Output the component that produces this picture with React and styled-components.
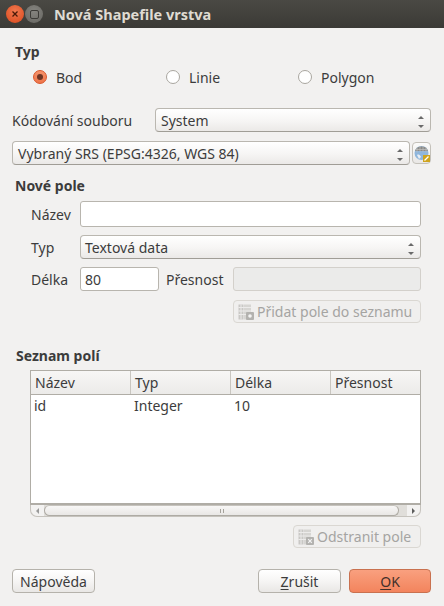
import React from 'react';
import styled, { createGlobalStyle } from 'styled-components';

const Global = createGlobalStyle`
    html, body {
        margin: 0;
        padding: 0;
        background: #f2f1f0;
    }
    * {
        box-sizing: border-box;
    }
    body {
        font-family: "Noto Sans", "Open Sans", sans-serif;
        font-size: 14px;
        color: #3c3c3c;
    }
`;

const Window = styled.div`
    width: 444px;
    height: 606px;
    display: flex;
    flex-direction: column;
    background: #f2f1f0;
    overflow: hidden;
`;

const TitleBar = styled.div`
    height: 28px;
    flex: none;
    display: flex;
    align-items: center;
    padding-left: 6px;
    background: linear-gradient(#4a4944, #3b3a36);
`;

const WinButton = styled.div`
    width: 18px;
    height: 18px;
    margin-right: 1px;
    border-radius: 50%;
    display: flex;
    align-items: center;
    justify-content: center;
    color: #3c3b37;
    background: ${p => (p.$close
        ? 'radial-gradient(circle at 50% 35%, #f2794f, #d9481c)'
        : 'radial-gradient(circle at 50% 35%, #85847f, #666560)')};
`;

const MaxBox = styled.div`
    width: 9px;
    height: 9px;
    border: 1px solid #3c3b37;
    border-radius: 2px;
`;

const Title = styled.div`
    margin-left: 10px;
    font-size: 14.5px;
    font-weight: 700;
    color: #dfdbd2;
`;

const Body = styled.div`
    flex: 1;
    display: flex;
    flex-direction: column;
    padding: 15px 13px 12px 12px;
`;

const Heading = styled.div`
    height: 18px;
    line-height: 18px;
    font-weight: 700;
    font-size: 14px;
    color: #3c3c3c;
    padding-left: ${p => p.$indent || 3}px;
    margin-top: ${p => p.$top || 0}px;
`;

const RadioRow = styled.div`
    display: grid;
    grid-template-columns: 133px 132px 1fr;
    padding-left: 21px;
    margin-top: 6px;
    height: 20px;
    align-items: center;
`;

const RadioItem = styled.label`
    display: flex;
    align-items: center;
    gap: 9px;
`;

const RadioDot = styled.span`
    width: 14px;
    height: 14px;
    border-radius: 50%;
    display: flex;
    align-items: center;
    justify-content: center;
    border: 1px solid ${p => (p.$on ? '#d9562a' : '#a9a69f')};
    background: ${p => (p.$on ? 'linear-gradient(#f5926b, #ee7449)' : '#fff')};
    &::after {
        content: '';
        display: ${p => (p.$on ? 'block' : 'none')};
        width: 6px;
        height: 6px;
        border-radius: 50%;
        background: #6e3524;
    }
`;

const Row = styled.div`
    display: flex;
    align-items: center;
    height: ${p => p.$h || 24}px;
    margin-top: ${p => p.$top || 0}px;
    padding-left: ${p => p.$left || 0}px;
    padding-right: ${p => p.$right || 0}px;
`;

const Label = styled.div`
    width: ${p => p.$w}px;
    flex: none;
    padding-left: ${p => p.$pad || 0}px;
`;

const Select = styled.div`
    flex: 1;
    height: ${p => p.$h || 24}px;
    display: flex;
    align-items: center;
    justify-content: space-between;
    padding: 0 6px 0 ${p => p.$pad || 5}px;
    border: 1px solid #bab7b0;
    border-bottom-color: #a09d96;
    border-radius: 4px;
    background: linear-gradient(#ffffff, #f6f5f4 55%, #ebe9e7);
`;

const ArrowStack = styled.span`
    display: flex;
    flex-direction: column;
    gap: 6px;
    margin-top: 3px;
    &::before, &::after {
        content: '';
        width: 0;
        height: 0;
        border-left: 3px solid transparent;
        border-right: 3px solid transparent;
    }
    &::before {
        border-bottom: 3px solid #6a6a6a;
    }
    &::after {
        border-top: 3px solid #6a6a6a;
    }
`;

const SrsButton = styled.div`
    width: 19px;
    height: 22px;
    margin-left: 2px;
    flex: none;
    display: flex;
    align-items: center;
    justify-content: center;
    border: 1px solid #c4c1ba;
    border-radius: 4px;
    background: linear-gradient(#fbfbfa, #e9e7e5);
`;

const Input = styled.div`
    height: ${p => p.$h || 24}px;
    width: ${p => (p.$w ? `${p.$w}px` : 'auto')};
    flex: ${p => (p.$w ? 'none' : '1')};
    display: flex;
    align-items: center;
    padding-left: 4px;
    border: 1px solid ${p => (p.$disabled ? '#d3d0cb' : '#b8b5ae')};
    border-radius: 3px;
    background: ${p => (p.$disabled ? '#ebebea' : '#fff')};
`;

const ActionRow = styled.div`
    display: flex;
    justify-content: flex-end;
    margin-top: ${p => p.$top}px;
    padding-right: ${p => p.$right || 10}px;
`;

const GhostButton = styled.div`
    width: ${p => p.$w}px;
    height: ${p => p.$h || 23}px;
    display: flex;
    align-items: center;
    justify-content: flex-start;
    gap: 3px;
    padding-left: 4px;
    color: #a5a4a2;
    border: 1px solid #dad7d2;
    border-radius: 4px;
    background: #f0efee;
`;

const Table = styled.div`
    margin: 5px 10px 0 18px;
    height: 135px;
    flex: none;
    display: flex;
    flex-direction: column;
    border: 1px solid #b0ada6;
    border-bottom-width: 2px;
    background: #fff;
`;

const HeaderRow = styled.div`
    display: grid;
    grid-template-columns: 100px 100px 100px 1fr;
    height: 24px;
    flex: none;
    background: linear-gradient(#f7f6f5, #ecebe9);
    border-bottom: 1px solid #b0ada6;
`;

const HeaderCell = styled.div`
    display: flex;
    align-items: center;
    padding-left: 4px;
    border-right: 1px solid #c9c6c0;
    &:last-child {
        border-right: none;
    }
`;

const DataRow = styled.div`
    display: grid;
    grid-template-columns: 100px 100px 100px 1fr;
    height: 20px;
    align-items: center;
`;

const DataCell = styled.div`
    padding-left: 3px;
`;

const ScrollBar = styled.div`
    margin: 0 10px 0 18px;
    height: 12px;
    flex: none;
    display: flex;
    border: 1px solid #c6c3bd;
    border-top: none;
    border-radius: 0 0 7px 7px;
    background: #e0deda;
`;

const ScrollEnd = styled.div`
    width: 13px;
    flex: none;
    display: flex;
    align-items: center;
    justify-content: center;
    background: #f3f2f1;
    border-radius: ${p => (p.$left ? '0 0 0 7px' : '0 0 7px 0')};
    &::after {
        content: '';
        border-top: 3px solid transparent;
        border-bottom: 3px solid transparent;
        ${p => (p.$left ? 'border-right: 3px solid #9a9a9a;' : 'border-left: 3px solid #5c5c5c;')}
    }
`;

const ScrollThumb = styled.div`
    width: 355px;
    flex: none;
    display: flex;
    align-items: center;
    justify-content: center;
    gap: 2px;
    border: 1px solid #aeaba4;
    border-top-color: #c6c3bd;
    border-radius: 7px;
    background: linear-gradient(#f8f7f6, #e9e7e5);
`;

const Grip = styled.span`
    width: 1px;
    height: 4px;
    background: #a5a29b;
`;

const ScrollRest = styled.div`
    flex: 1;
`;

const Footer = styled.div`
    display: flex;
    margin-top: 21px;
    height: 24px;
`;

const Button = styled.div`
    width: ${p => p.$w}px;
    height: 24px;
    margin-left: ${p => p.$left || 0}px;
    display: flex;
    align-items: center;
    justify-content: center;
    border-radius: 4px;
    border: 1px solid ${p => (p.$primary ? '#c9714f' : '#b5b2ab')};
    background: ${p => (p.$primary
        ? 'linear-gradient(#f9a07f, #f3845d)'
        : 'linear-gradient(#ffffff, #f6f5f4 50%, #e9e7e5)')};
    color: ${p => (p.$primary ? '#43302a' : '#3c3c3c')};
`;

const Key = styled.span`
    text-decoration: underline;
    text-underline-offset: 2px;
`;

const CloseMark = () => (
    <svg width="8" height="8" viewBox="0 0 8 8">
        <path d="M1.5 1.5l5 5M6.5 1.5l-5 5" stroke="#4a1a08" strokeWidth="1.3" />
    </svg>
);

const TableIcon = ({ remove }) => (
    <svg width="16" height="16" viewBox="0 0 16 16">
        <rect x="0.5" y="0.5" width="5" height="15" fill="#c9c8c5" />
        <rect x="6" y="0.5" width="7" height="15" fill="#d6d5d2" />
        <path d="M0.5 3.5h12.5M0.5 7h12.5M0.5 10.5h12.5M3 0.5v15" stroke="#ecebea" strokeWidth="1" />
        <rect x="8" y="8" width="8" height="8" rx="1" fill="#b3b2af" />
        {remove
            ? <path d="M10.2 10.2l3.6 3.6M13.8 10.2l-3.6 3.6" stroke="#f4f4f4" strokeWidth="1.2" />
            : <circle cx="12" cy="12" r="1.8" fill="#f4f4f4" />}
    </svg>
);

const GlobeIcon = () => (
    <svg width="16" height="17" viewBox="0 0 16 17">
        <circle cx="7.5" cy="8" r="7" fill="#8fb6dc" />
        <path d="M1 6a7 7 0 0 1 13 0z" fill="#8a8a88" />
        <path d="M3 2.5v5M6 1v6M9 1v6M12 2.5v5M1 4.5h13" stroke="#c0c0be" strokeWidth=".7" />
        <path d="M3 10c2-1 3 0 4 2l-2 2z" fill="#e8eef4" />
        <rect x="9" y="10" width="7" height="7" fill="#cfa41e" />
        <path d="M10.5 15.5l4-4" stroke="#fff" strokeWidth="1.2" />
    </svg>
);

export default function App() {
    return (
        <Window>
            <Global />
            <TitleBar>
                <WinButton $close><CloseMark /></WinButton>
                <WinButton><MaxBox /></WinButton>
                <Title>Nová Shapefile vrstva</Title>
            </TitleBar>
            <Body>
                <Heading>Typ</Heading>
                <RadioRow>
                    <RadioItem><RadioDot $on />Bod</RadioItem>
                    <RadioItem><RadioDot />Linie</RadioItem>
                    <RadioItem><RadioDot />Polygon</RadioItem>
                </RadioRow>

                <Row $top={21}>
                    <Label $w={143}>Kódování souboru</Label>
                    <Select>System<ArrowStack /></Select>
                </Row>
                <Row $top={9}>
                    <Select>Vybraný SRS (EPSG:4326, WGS 84)<ArrowStack /></Select>
                    <SrsButton><GlobeIcon /></SrsButton>
                </Row>

                <Heading $top={12}>Nové pole</Heading>
                <Row $h={26} $top={6} $left={19} $right={10}>
                    <Label $w={49}>Název</Label>
                    <Input $h={26} />
                </Row>
                <Row $top={8} $left={19} $right={10}>
                    <Label $w={49}>Typ</Label>
                    <Select $pad={4}>Textová data<ArrowStack /></Select>
                </Row>
                <Row $top={8} $left={19} $right={10}>
                    <Label $w={49}>Délka</Label>
                    <Input $w={79}>80</Input>
                    <Label $w={74} $pad={7}>Přesnost</Label>
                    <Input $disabled />
                </Row>
                <ActionRow $top={9}>
                    <GhostButton $w={188}><TableIcon />Přidat pole do seznamu</GhostButton>
                </ActionRow>

                <Heading $top={24} $indent={4}>Seznam polí</Heading>
                <Table>
                    <HeaderRow>
                        <HeaderCell>Název</HeaderCell>
                        <HeaderCell>Typ</HeaderCell>
                        <HeaderCell>Délka</HeaderCell>
                        <HeaderCell>Přesnost</HeaderCell>
                    </HeaderRow>
                    <DataRow>
                        <DataCell>id</DataCell>
                        <DataCell>Integer</DataCell>
                        <DataCell>10</DataCell>
                    </DataRow>
                </Table>
                <ScrollBar>
                    <ScrollEnd $left />
                    <ScrollThumb><Grip /><Grip /></ScrollThumb>
                    <ScrollRest />
                    <ScrollEnd />
                </ScrollBar>
                <ActionRow $top={8}>
                    <GhostButton $w={128}><TableIcon remove />Odstranit pole</GhostButton>
                </ActionRow>

                <Footer>
                    <Button $w={83}>Nápověda</Button>
                    <Button $w={83} $left={163}><Key>Z</Key>rušit</Button>
                    <Button $w={82} $left={8} $primary><Key>O</Key>K</Button>
                </Footer>
            </Body>
        </Window>
    );
}
